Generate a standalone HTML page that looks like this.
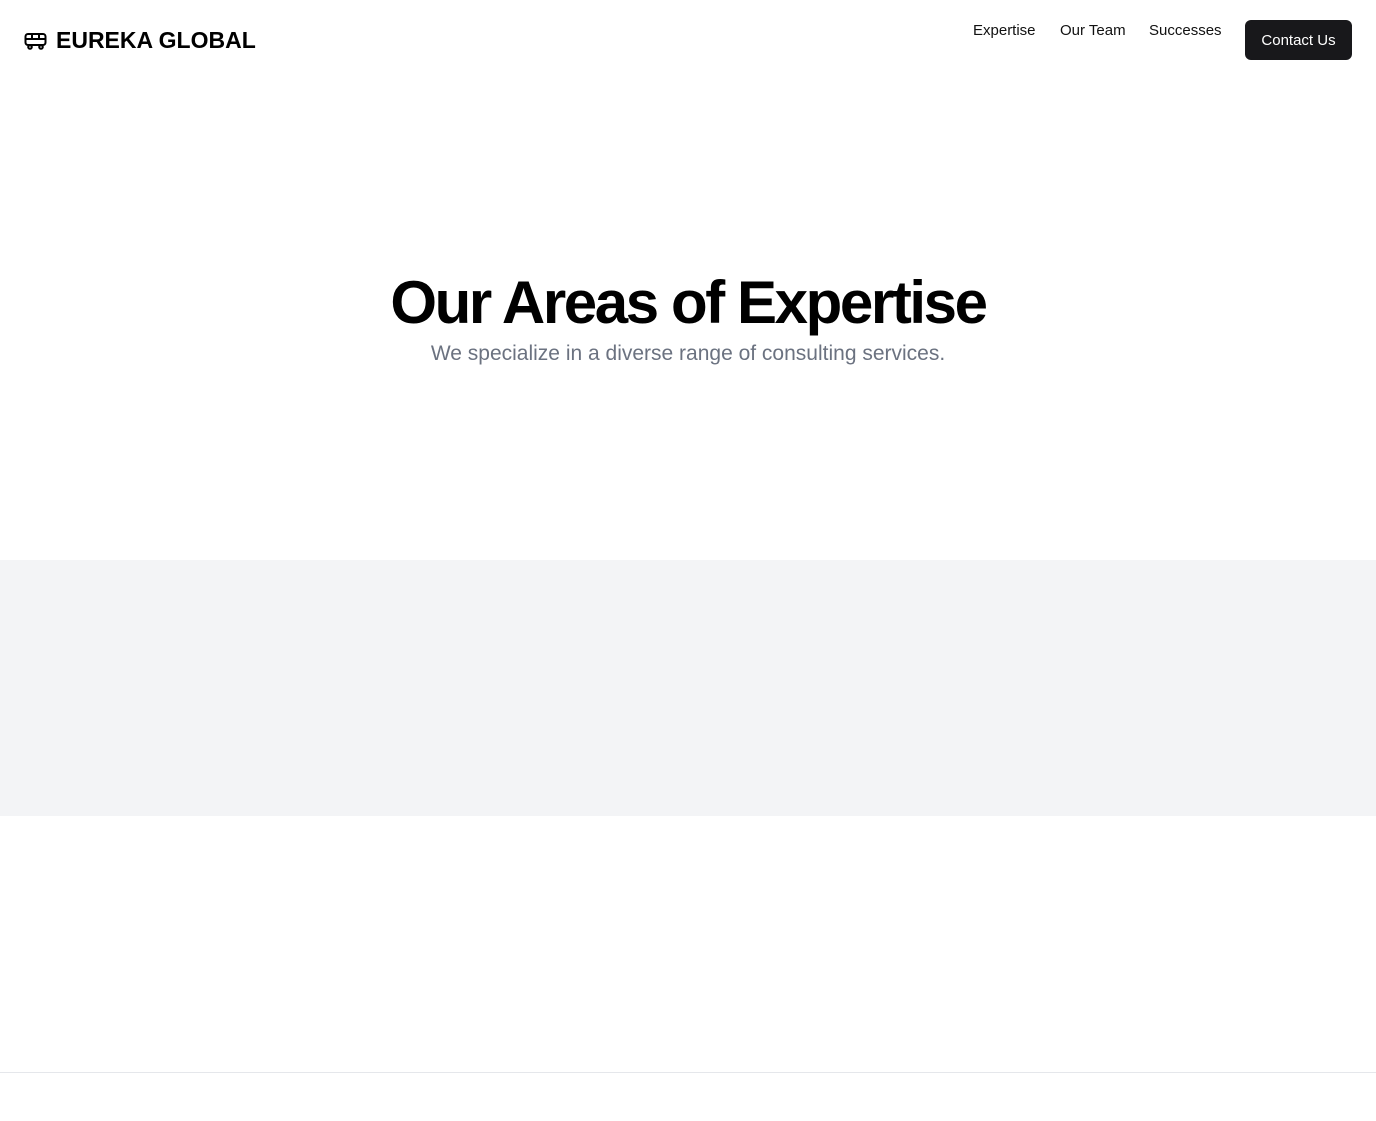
<!DOCTYPE html>
<html><head><style>
body{margin:0;width:1376px;height:1121px;background:#fff;font-family:"Liberation Sans",sans-serif;position:relative;overflow:hidden}
.logo{position:absolute;left:24px;top:27px;display:flex;align-items:center;gap:9px;font-weight:bold;font-size:23px;color:#000}
.nav{position:absolute;top:22px;font-size:15px;color:#111}
.btn{position:absolute;left:1245px;top:20px;width:107px;height:40px;background:#18181b;color:#fff;border-radius:6px;font-size:15px;display:flex;align-items:center;justify-content:center}
h1{position:absolute;left:0;right:0;top:270px;margin:0;text-align:center;font-size:60px;letter-spacing:-2.4px;font-weight:bold;color:#000;line-height:66px}
.sub{position:absolute;left:0;right:0;top:342px;text-align:center;font-size:21px;color:#6b7280}
.gray{position:absolute;left:0;top:560px;width:1376px;height:256px;background:#f3f4f6}
.line{position:absolute;left:0;top:1072px;width:1376px;height:1px;background:#e5e7eb}
</style></head><body>
<div class="logo"><svg width="23" height="18" viewBox="0 0 23 18" fill="none" stroke="#000" stroke-width="2"><rect x="1.5" y="2" width="20" height="11" rx="2.5"/><line x1="1.5" y1="7" x2="21.5" y2="7"/><line x1="8" y1="2" x2="8" y2="7"/><line x1="15" y1="2" x2="15" y2="7"/><circle cx="6" cy="15" r="1.8" fill="#fff"/><circle cx="17" cy="15" r="1.8" fill="#fff"/></svg><span>EUREKA GLOBAL</span></div>
<div class="nav" style="left:973px">Expertise</div>
<div class="nav" style="left:1060px">Our Team</div>
<div class="nav" style="left:1149px">Successes</div>
<div class="btn">Contact Us</div>
<h1>Our Areas of Expertise</h1>
<div class="sub">We specialize in a diverse range of consulting services.</div>
<div class="gray"></div>
<div class="line"></div>
</body></html>
